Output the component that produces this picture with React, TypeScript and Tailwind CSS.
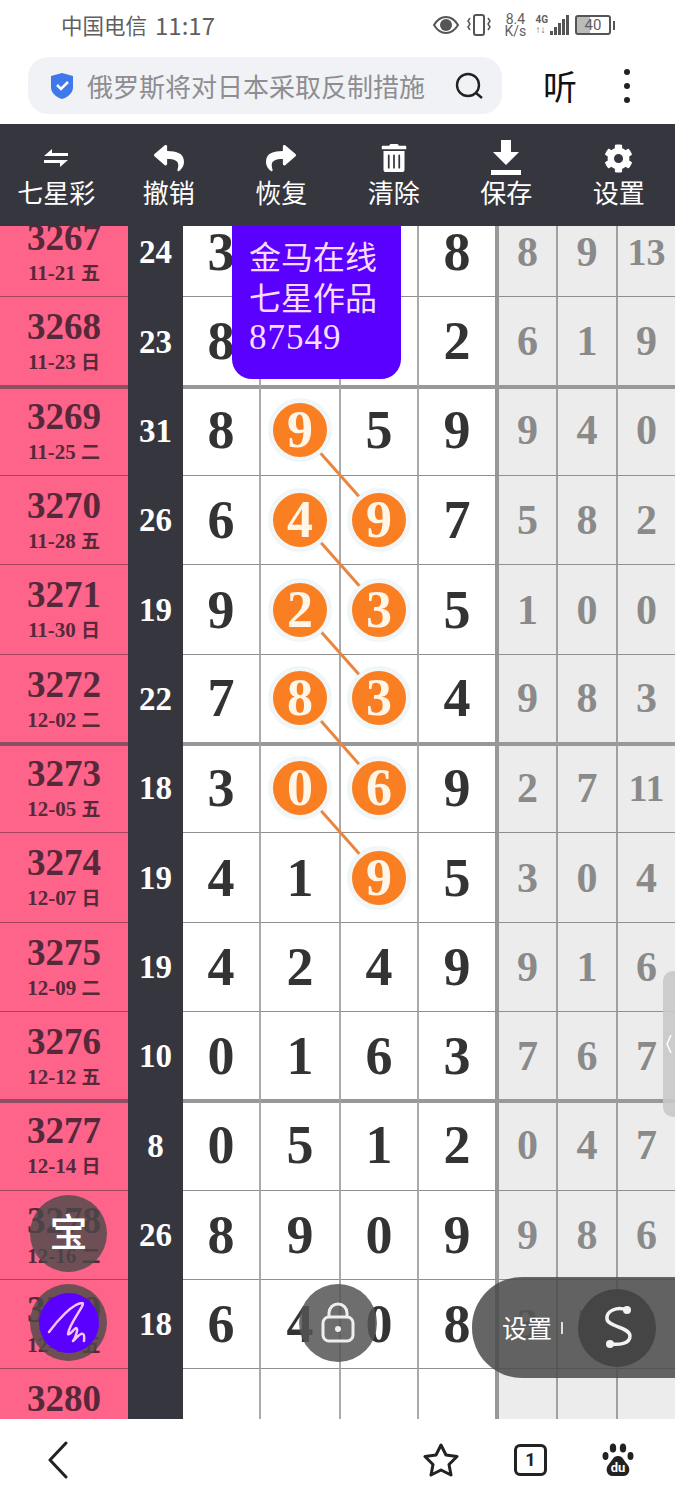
import React from "react";
import { FaReply, FaShare, FaTrashAlt, FaCog } from "react-icons/fa";

type Row = {
  no: string;
  date: string;
  week: string;
  sum: string;
  main: string[];
  hit: number[];
  rest: string[];
};

const rows: Row[] = [
  { no: "3267", date: "11-21", week: "五", sum: "24", main: ["3", "7", "6", "8"], hit: [], rest: ["8", "9", "13"] },
  { no: "3268", date: "11-23", week: "日", sum: "23", main: ["8", "5", "8", "2"], hit: [], rest: ["6", "1", "9"] },
  { no: "3269", date: "11-25", week: "二", sum: "31", main: ["8", "9", "5", "9"], hit: [1], rest: ["9", "4", "0"] },
  { no: "3270", date: "11-28", week: "五", sum: "26", main: ["6", "4", "9", "7"], hit: [1, 2], rest: ["5", "8", "2"] },
  { no: "3271", date: "11-30", week: "日", sum: "19", main: ["9", "2", "3", "5"], hit: [1, 2], rest: ["1", "0", "0"] },
  { no: "3272", date: "12-02", week: "二", sum: "22", main: ["7", "8", "3", "4"], hit: [1, 2], rest: ["9", "8", "3"] },
  { no: "3273", date: "12-05", week: "五", sum: "18", main: ["3", "0", "6", "9"], hit: [1, 2], rest: ["2", "7", "11"] },
  { no: "3274", date: "12-07", week: "日", sum: "19", main: ["4", "1", "9", "5"], hit: [2], rest: ["3", "0", "4"] },
  { no: "3275", date: "12-09", week: "二", sum: "19", main: ["4", "2", "4", "9"], hit: [], rest: ["9", "1", "6"] },
  { no: "3276", date: "12-12", week: "五", sum: "10", main: ["0", "1", "6", "3"], hit: [], rest: ["7", "6", "7"] },
  { no: "3277", date: "12-14", week: "日", sum: "8", main: ["0", "5", "1", "2"], hit: [], rest: ["0", "4", "7"] },
  { no: "3278", date: "12-16", week: "二", sum: "26", main: ["8", "9", "0", "9"], hit: [], rest: ["9", "8", "6"] },
  { no: "3279", date: "12-19", week: "五", sum: "18", main: ["6", "4", "0", "8"], hit: [], rest: ["3", "5", "3"] },
  { no: "3280", date: "12-21", week: "日", sum: "", main: ["", "", "", ""], hit: [], rest: ["", "", ""] },
];

const serif = "[font-family:'Liberation_Serif','Noto_Sans_CJK_SC',serif] font-bold";
const sans = "[font-family:'Noto_Sans_CJK_SC','Roboto',sans-serif]";

// ball to ball links, in table coordinates
const links = [
  [300, 204, 379, 293],
  [300, 293, 379, 382],
  [300, 382, 379, 471],
  [300, 471, 379, 561],
  [300, 561, 379, 650],
];

const ExchangeIcon = () => (
  <svg width="26" height="24" viewBox="0 0 26 24" fill="#fff">
    <path d="M1 10 9 3v4h16v3z" />
    <path d="M25 14 17 21v-4H1v-3z" />
  </svg>
);

const DownloadIcon = () => (
  <svg width="32" height="36" viewBox="0 0 32 36" fill="#fff">
    <path d="M11 0h10v12h8L16 25 3 12h8z" />
    <rect x="1" y="30" width="30" height="5" />
  </svg>
);

const tools = [
  { label: "七星彩", icon: <ExchangeIcon /> },
  { label: "撤销", icon: <FaReply size={30} color="#fff" /> },
  { label: "恢复", icon: <FaShare size={30} color="#fff" /> },
  { label: "清除", icon: <FaTrashAlt size={28} color="#fff" /> },
  { label: "保存", icon: <DownloadIcon /> },
  { label: "设置", icon: <FaCog size={29} color="#fff" /> },
];

const StatusBar = () => (
  <div className={`flex h-[50px] items-center justify-between pl-[61px] pr-[60px] text-[#5f5f5f] ${sans}`}>
    <div className="flex items-center text-[24px] leading-none">
      <span className="w-[86px] whitespace-nowrap text-[21.5px]">中国电信</span>
      <span className="ml-[8px]">11:17</span>
    </div>
    <div className="flex items-center">
      <svg width="26" height="18" viewBox="0 0 26 18">
        <path d="M1 9c3-5 7-8 12-8s9 3 12 8c-3 5-7 8-12 8S4 14 1 9z" fill="none" stroke="#555" strokeWidth="2" />
        <circle cx="13" cy="9" r="6" fill="#555" />
      </svg>
      <svg className="ml-[7px]" width="26" height="24" viewBox="0 0 26 24" fill="none" stroke="#555" strokeWidth="2">
        <rect x="8" y="2" width="10" height="20" rx="2" />
        <path d="M4 5l-2 3 2 3-2 3 2 3M22 5l2 3-2 3 2 3-2 3" strokeWidth="1.5" />
      </svg>
      <div className="ml-[10px] flex w-[26px] flex-col items-center text-[14px] leading-[12px] [font-family:Roboto,sans-serif]">
        <span>8.4</span>
        <span>K/s</span>
      </div>
      <div className="ml-[7px] flex items-end gap-[1px]">
        <div className="flex flex-col items-start text-[10px] font-bold leading-[10px] [font-family:Roboto,sans-serif]">
          <span>4G</span>
          <span>↑↓</span>
        </div>
        <div className="ml-[1px] h-[4px] w-[3px] bg-[#555]" />
        <div className="h-[8px] w-[3px] bg-[#555]" />
        <div className="h-[12px] w-[3px] bg-[#555]" />
        <div className="h-[16px] w-[3px] bg-[#555]" />
        <div className="h-[20px] w-[3px] bg-[#555]" />
      </div>
      <div className="ml-[6px] flex items-center gap-[2px]">
        <div className="flex h-[20px] w-[36px] items-center justify-center rounded-[3px] border-2 border-[#555] bg-[linear-gradient(90deg,#bbb_40%,#fff_40%)] text-[15px] leading-none [font-family:Roboto,sans-serif]">
          40
        </div>
        <div className="h-[9px] w-[2px] bg-[#555]" />
      </div>
    </div>
  </div>
);

const AddressBar = () => (
  <div className="flex h-[74px] items-start pl-[28px] pt-[7px]">
    <div className="flex h-[57px] w-[474px] items-center rounded-[20px] bg-[#f1f2f5] pl-[22px]">
      <svg width="24" height="28" viewBox="0 0 24 28">
        <path d="M12 1l11 3v11c0 6-5 10-11 12C6 25 1 21 1 15V4z" fill="#3f78ea" />
        <path d="M7 13l4 4 7-7" fill="none" stroke="#fff" strokeWidth="2.5" />
      </svg>
      <span className={`ml-[13px] w-[345px] whitespace-nowrap text-[26px] leading-none text-[#8d8d92] ${sans}`}>
        俄罗斯将对日本采取反制措施
      </span>
      <svg className="ml-[22px]" width="30" height="30" viewBox="0 0 30 30" fill="none" stroke="#222" strokeWidth="2.4">
        <circle cx="14" cy="14" r="11" />
        <path d="M22 22l6 5" />
      </svg>
    </div>
    <span className={`ml-[41px] mt-[9px] text-[34px] leading-[40px] text-[#111] ${sans}`}>听</span>
    <div className="ml-[47px] mt-[12px] flex flex-col gap-[8px]">
      <div className="h-[6px] w-[6px] rounded-full bg-[#222]" />
      <div className="h-[6px] w-[6px] rounded-full bg-[#222]" />
      <div className="h-[6px] w-[6px] rounded-full bg-[#222]" />
    </div>
  </div>
);

const Toolbar = () => (
  <div className="grid h-[102px] grid-cols-6 bg-[#36363e]">
    {tools.map((t) => (
      <div key={t.label} className="flex flex-col items-center pt-[16px]">
        <div className="flex h-[36px] items-center justify-center">{t.icon}</div>
        <span className={`-mt-[1px] text-[26px] leading-[34px] text-white ${sans}`}>{t.label}</span>
      </div>
    ))}
  </div>
);

const TableRow = ({ row, thickTop, thickBottom }: { row: Row; thickTop: boolean; thickBottom: boolean }) => {
  // thick rules straddle the row boundary, thin ones are hairlines
  const top = thickTop ? "border-t-2 border-t-[#989898] pb-[3px]" : "";
  const line = thickBottom ? "border-b-2 border-b-[#989898]" : "border-b border-b-[#8f8f8f]";
  const pinkTop = thickTop ? "border-t-2 border-t-[#8f4f62] pt-[8px]" : "pt-[10px]";
  const pinkLine = thickBottom ? "border-b-2 border-b-[#8f4f62]" : "border-b border-b-[#a8435f]";
  return (
    <div className="grid h-[89.35px] grid-cols-[128px_55px_78px_80px_78px_80px_59px_60px_57px]">
      <div className={`flex flex-col items-center justify-start bg-[#fe6389] text-[#55293a] ${serif} ${pinkTop} ${pinkLine}`}>
        <span className="text-[37px] leading-[40px]">{row.no}</span>
        <span className="mt-[2px] text-[21px] leading-[26px]">
          {row.date} <span className="text-[19px]">{row.week}</span>
        </span>
      </div>
      <div className={`flex items-center justify-center bg-[#36363e] text-[33px] leading-none text-white ${serif}`}>
        {row.sum}
      </div>
      {row.main.map((n, i) => (
        <div
          key={i}
          className={`flex items-center justify-center bg-white ${top} ${line} ${
            i === 3 ? "border-r-[4px] border-r-[#989898]" : "border-r-2 border-r-[#aaaaaa]"
          }`}
        >
          {row.hit.includes(i) ? (
            <div className="relative z-10 flex h-[62px] w-[62px] items-center justify-center rounded-full border-[4px] border-[#f3f6f6] bg-[#f97f22] shadow-[0_0_2px_#cfe4f2]">
              <span className={`text-[52px] leading-none text-[#fff6e8] ${serif}`}>{n}</span>
            </div>
          ) : (
            <span className={`text-[54px] leading-none text-[#333] ${serif}`}>{n}</span>
          )}
        </div>
      ))}
      {row.rest.map((n, i) => (
        <div
          key={i}
          className={`flex items-center justify-center bg-[#ececec] ${top} ${line} ${i < 2 ? "border-r-2 border-r-[#a0a0a0]" : ""}`}
        >
          <span className={`${n.length > 1 ? "text-[38px]" : "text-[42px]"} leading-none text-[#8a8a8a] ${serif}`}>{n}</span>
        </div>
      ))}
    </div>
  );
};

const Table = () => (
  <div className="relative h-[1193px] overflow-hidden bg-white">
    <div className="relative -mt-[18px]">
      {rows.map((r, i) => (
        <TableRow key={r.no} row={r} thickBottom={i % 4 === 1} thickTop={i % 4 === 2} />
      ))}
      <svg className="pointer-events-none absolute left-0 top-[18px]" width="675" height="1193">
        {links.map((l, i) => (
          <line key={i} x1={l[0]} y1={l[1]} x2={l[2]} y2={l[3]} stroke="#e8853f" strokeWidth="3" />
        ))}
      </svg>
    </div>

    {/* popup label */}
    <div className={`absolute left-[232px] top-0 h-[153px] w-[169px] rounded-b-[20px] bg-[#5a00ff] pl-[17px] pt-[9px] text-[32px] leading-[41px] text-[#f7dcff] ${sans}`}>
      <div>金马在线</div>
      <div>七星作品</div>
      <div className="text-[35px] tracking-[1px] [font-family:'Liberation_Serif',serif]">87549</div>
    </div>

    {/* side handle */}
    <div className="absolute right-0 top-[745px] flex h-[146px] w-[12px] items-center justify-center rounded-l-[10px] bg-[#c9c9c9]/90">
      <svg width="8" height="22" viewBox="0 0 8 22" fill="none" stroke="#fff" strokeWidth="1.5">
        <path d="M6 2 2 11l4 9" />
      </svg>
    </div>

    {/* floating buttons */}
    <div className={`absolute left-[30px] top-[969px] flex h-[77px] w-[77px] items-center justify-center rounded-full bg-[#4a4a4a]/80 pb-[8px] text-[38px] font-medium leading-none text-white ${sans}`}>
      宝
    </div>
    <div className="absolute left-[30px] top-[1058px] flex h-[77px] w-[77px] items-center justify-center rounded-full bg-[#4a4a4a]/80">
      <div className="flex h-[60px] w-[60px] items-center justify-center rounded-full bg-[#5a00ff]">
        <svg width="44" height="44" viewBox="0 0 44 44" fill="none" stroke="#f4c4f5" strokeWidth="2.5" strokeLinecap="round" strokeLinejoin="round">
          <path d="M2 31C10 20 26 2 35 2C40 2 22 22 21 33C23 35 29 24 30 28C31 30 27 39 26 40C29 38 33 31 36 33C38 34 37 38 37 40" />
        </svg>
      </div>
    </div>
    <div className="absolute left-[299px] top-[1058px] flex h-[78px] w-[78px] items-center justify-center rounded-full bg-[#555]/85">
      <svg width="36" height="42" viewBox="0 0 36 42" fill="none" stroke="#eee" strokeWidth="3">
        <rect x="3" y="15" width="30" height="24" rx="6" />
        <path d="M9 15v-4a9 9 0 0 1 18 0v4" />
        <circle cx="18" cy="27" r="3" fill="#eee" stroke="none" />
      </svg>
    </div>
    <div className="absolute right-0 top-[1051px] flex h-[101px] w-[203px] items-center rounded-l-[50px] bg-[#4a4a4a]/85 pl-[30px]">
      <span className={`text-[25px] leading-none text-white ${sans}`}>设置</span>
      <div className="ml-[9px] h-[12px] w-[2px] bg-white/80" />
      <div className="ml-[15px] flex h-[78px] w-[78px] items-center justify-center rounded-full bg-[#454545]">
        <svg width="40" height="50" viewBox="0 0 40 50" fill="none" stroke="#f2f2f2" strokeWidth="3.5" strokeLinecap="round">
          <path d="M30 7C20 3 9 8 10 16C11 24 33 24 33 33C33 41 22 42 13 41" />
          <circle cx="30" cy="7" r="4" fill="#f2f2f2" stroke="none" />
          <circle cx="13" cy="41" r="4" fill="#f2f2f2" stroke="none" />
        </svg>
      </div>
    </div>
  </div>
);

const BottomBar = () => (
  <div className="flex h-[81px] items-center bg-white pl-[47px]">
    <svg width="22" height="38" viewBox="0 0 22 38" fill="none" stroke="#222" strokeWidth="3" strokeLinecap="round" strokeLinejoin="round">
      <path d="M19 2 3 19l16 17" />
    </svg>
    <svg className="ml-[354px]" width="36" height="36" viewBox="0 0 36 36" fill="none" stroke="#222" strokeWidth="3" strokeLinejoin="round">
      <path d="M18 3l5 10 11 1.500-8 8 2 10.500-10-5-10 5 2-10.500-8-8 11-1.500z" />
    </svg>
    <div className="ml-[55px] flex h-[32px] w-[33px] items-center justify-center rounded-[6px] border-[3px] border-[#222] text-[18px] font-bold leading-none text-[#222] [font-family:Roboto,sans-serif]">
      1
    </div>
    <div className="relative ml-[55px] h-[34px] w-[32px]">
      <svg width="32" height="34" viewBox="0 0 32 34" fill="#222">
        <ellipse cx="3.500" cy="13" rx="3" ry="4" />
        <ellipse cx="11" cy="5" rx="3.200" ry="4.500" />
        <ellipse cx="21" cy="5" rx="3.200" ry="4.500" />
        <ellipse cx="28.500" cy="13" rx="3" ry="4" />
        <path d="M16 13c5 0 6 5 9 8 4 4 3 12-4 12H11C4 33 3 25 7 21c3-3 4-8 9-8z" />
      </svg>
      <span className="absolute left-0 top-[18px] w-full text-center text-[13px] font-bold leading-none text-white [font-family:Roboto,sans-serif]">
        du
      </span>
    </div>
  </div>
);

export default function App() {
  return (
    <div className="h-[1500px] w-[675px] overflow-hidden bg-white">
      <StatusBar />
      <AddressBar />
      <Toolbar />
      <Table />
      <BottomBar />
    </div>
  );
}
